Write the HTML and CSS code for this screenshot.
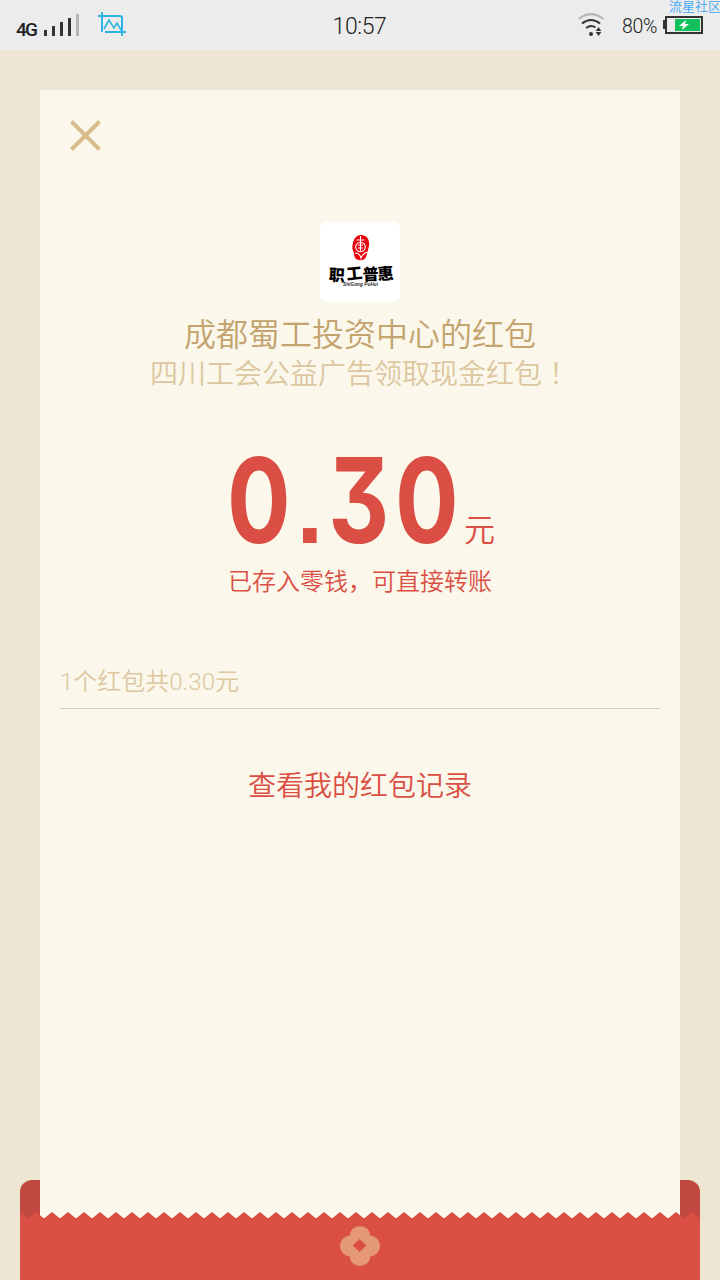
FILE: index.html
```html
<!DOCTYPE html>
<html lang="zh-CN">
<head>
  <meta charset="UTF-8">
  <meta name="viewport" content="width=device-width, initial-scale=1.0">
  <title>红包详情</title>
  <link rel="stylesheet" href="styles.css">
</head>
<body>
  <header class="status-bar">
    <div class="status-left">
      <span class="network">4G</span>
      <svg class="signal" width="36" height="22" viewBox="0 0 36 22">
        <path fill="#333" d="M0 16h3v6H0zM8 12h3v10H8zM16 8h3v14h-3zM24 4h3v18h-3z"/>
        <path fill="#b5b5b5" d="M32 0h3v22h-3z"/>
      </svg>
      <svg class="crop" width="28" height="24" viewBox="0 0 28 24" fill="none" stroke="#2cb5e2" stroke-width="2">
        <path d="M4 0v20M0 4h22q2 0 2 2v18M7 20h21"/>
        <path stroke-width="1.6" d="M6 17l5-9 5 8 3-5 4 7"/>
      </svg>
    </div>
    <div class="clock">10:57</div>
    <div class="status-right">
      <svg class="wifi" width="26" height="24" viewBox="0 0 26 24" fill="none" stroke-width="2">
        <path stroke="#b5b5b5" d="M.7 6Q13-3.8 25.3 6"/>
        <path stroke="#333" d="M4 10.500q9-7 18 0M8 15q5-3.600 9.500-.5"/>
        <circle cx="13" cy="21" r="2" fill="#333"/>
        <path fill="#333" d="M20.500 14l2.800 4h-5.600zM20.500 23l2.800-4h-5.600z"/>
      </svg>
      <span class="percent">80%</span>
      <svg class="battery" width="40" height="18" viewBox="0 0 40 18">
        <path fill="#333" d="M0 4h3v9H0z"/>
        <rect x="3" y="1" width="36" height="16" fill="none" stroke="#333" stroke-width="2"/>
        <path fill="#13c05b" d="M12 3h25v12H12z"/>
        <path fill="#fff" d="M23 4l-7 6h4l-1 4 7-6h-4z"/>
      </svg>
    </div>
    <div class="community">流星社区</div>
  </header>

  <main class="page">
    <section class="card">
      <svg class="close" width="31" height="31" viewBox="0 0 31 31" stroke="#d8bc8c" stroke-width="4">
        <path d="M1.500 1.500l28 28M29.500 1.500l-28 28"/>
      </svg>
      <svg class="logo" width="80" height="80" viewBox="0 0 80 80">
        <rect width="80" height="80" rx="7" fill="#fff"/>
        <path fill="#e9000b" d="M41 13c6 0 9 5 8 11-1 3-1 5-2 8-1 5-4 7-8 6-4 0-5-4-5-7-2-3-2-7-1-10 1-5 4-8 8-8z"/>
        <g fill="none" stroke="#fff" stroke-width="1.100">
          <circle cx="40.500" cy="25" r="4.800"/>
          <path d="M40.500 14v15M36.500 18h8M38 23h5M38 26h5M35 31q5 0 6 5 2-5 7-6"/>
        </g>
        <text class="logo-name" x="8.500 27 43 58" y="58.500 58 58.500 58" rotate="3 -6 -3 -4">职工普惠</text>
        <text class="logo-pinyin" x="23" y="64" textLength="35">ShiGong PuHui</text>
      </svg>
      <h1 class="sender">成都蜀工投资中心的红包</h1>
      <p class="greeting">四川工会公益广告领取现金红包<span class="mark" lang="zh-TW">！</span></p>
      <div class="amount">
        <span class="number">0<i class="dot">.</i>30</span>
        <span class="unit">元</span>
      </div>
      <p class="saved">已存入零钱，可直接转账</p>
      <p class="summary">1个红包共0.30元</p>
      <a class="records">查看我的红包记录</a>
    </section>

    <div class="envelope-back"></div>
    <footer class="envelope-front">
      <svg class="teeth" width="680" height="7">
        <defs>
          <pattern id="tooth" width="16" height="7" patternUnits="userSpaceOnUse">
            <path fill="#da4e43" d="M0 0l8 6.500L16 0v7H0z"/>
          </pattern>
        </defs>
        <rect width="680" height="7" fill="url(#tooth)"/>
      </svg>
      <div class="pocket">
        <svg width="40" height="40" viewBox="0 0 40 40">
          <g fill="#e59875">
            <circle cx="20" cy="10.500" r="10.500"/>
            <circle cx="10.500" cy="20" r="10.500"/>
            <circle cx="29.500" cy="20" r="10.500"/>
            <circle cx="20" cy="29.500" r="10.500"/>
          </g>
          <path fill="#da4e43" d="M19.500 13l6.800 6.500-6.800 6.500-6.800-6.500z"/>
        </svg>
      </div>
    </footer>
  </main>
</body>
</html>
```

FILE: styles.css
```css
* { box-sizing: border-box; }
body { margin: 0; height: 1280px; display: flex; flex-direction: column; overflow: hidden; background: #ede6d3; font-family: Roboto, "Noto Sans CJK SC", sans-serif; font-weight: 350; }
h1, p { margin: 0; font-weight: 350; }
svg { display: block; flex: none; }

.status-bar { position: relative; height: 50px; display: grid; grid-template-columns: 1fr auto 1fr; padding: 0 17px 0 16px; background: #ececec; color: #222; }
.status-left { display: flex; align-items: flex-start; }
.network { width: 28px; padding-top: 20px; font: 500 19px/20px Roboto, sans-serif; letter-spacing: -1.8px; }
.signal { margin-top: 14px; }
.crop { margin: 12px 0 0 18px; }
.clock { font-size: 23px; line-height: 54px; letter-spacing: -0.4px; }
.status-right { display: flex; justify-content: flex-end; align-items: flex-start; }
.wifi { margin-top: 13px; }
.percent { width: 41px; margin-left: 18px; font-size: 19.5px; line-height: 53px; letter-spacing: -0.3px; }
.battery { margin-top: 16px; }
.community { position: absolute; top: -2px; right: -1px; font-size: 13px; line-height: 18px; color: #3fa5f5; }

.page { position: relative; flex: 1; display: flex; padding: 40px 40px 0; }
.card { flex: 1; display: flex; flex-direction: column; align-items: center; padding: 30px 20px 0; background: #fbf7ea; color: #da4e43; }
.close { align-self: flex-start; margin-left: 10px; }
.logo { margin-top: 71px; overflow: visible; }
.logo-name { font: 900 16px "Noto Sans CJK SC", sans-serif; fill: #000; }
.logo-pinyin { font: italic bold 4.5px "Liberation Sans", sans-serif; fill: #222; }
.sender { margin-top: 13px; font-size: 32px; line-height: 40px; color: #c3a36e; }
.greeting { height: 40px; font-size: 28px; line-height: 40px; color: #dcc7a1; }
.mark { font-family: "Noto Sans CJK TC", sans-serif; line-height: 1; }
.amount { align-self: stretch; height: 122px; margin-top: 39px; padding-left: 167px; display: flex; align-items: baseline; }
.number { width: 237px; padding-top: 5px; font: 700 118px/122px Inter, sans-serif; font-feature-settings: "cv09" 1; letter-spacing: 7px; white-space: nowrap; transform: scaleX(0.8); transform-origin: 0 0; }
.dot { display: inline-block; width: 40px; font: bold 100px/100px "Liberation Sans", sans-serif; letter-spacing: 0; transform: scaleX(1.2); transform-origin: 0 0; }
.unit { position: relative; top: -2px; font-size: 31px; }
.saved { margin-top: 8px; font-size: 24px; line-height: 36px; }
.summary { align-self: stretch; margin-top: 55px; padding: 7px 0 6px; border-bottom: 1px solid #d5d0c2; font-size: 24px; line-height: 40px; color: #dcc7a1; }
.records { margin-top: 58px; font-size: 28px; line-height: 40px; }

.envelope-back { position: absolute; left: 20px; right: 20px; bottom: 0; height: 100px; border-radius: 12px 12px 0 0; background: #c1483e; z-index: -1; }
.envelope-front { position: absolute; left: 20px; right: 20px; bottom: 0; }
.pocket { height: 61px; display: flex; justify-content: center; padding-top: 7px; background: #da4e43; }
```
